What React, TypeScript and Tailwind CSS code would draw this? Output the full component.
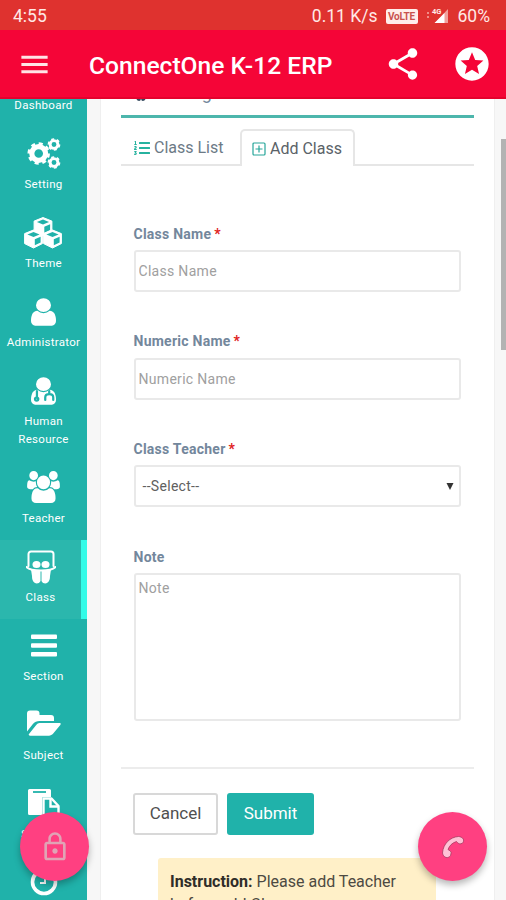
import type { ReactNode } from "react";
import { clsx } from "clsx";
import { FaListOl, FaSlideshare } from "react-icons/fa";
import { MdLockOutline, MdMenu, MdShare, MdStars } from "react-icons/md";

const USER_PATH =
  "M1536 1399q0 109-62.5 187t-150.5 78h-854q-88 0-150.5-78t-62.5-187q0-85 8.5-160.5t31.5-152 58.5-131 94-89 134.5-34.5q131 128 313 128t313-128q76 0 134.5 34.5t94 89 58.5 131 31.5 152 8.5 160.5zm-256-887q0 159-112.5 271.5t-271.5 112.5-271.5-112.5-112.5-271.5 112.5-271.5 271.5-112.5 271.5 112.5 112.5 271.5z";

function UserIcon() {
  return (
    <svg viewBox="0 0 1792 1792" preserveAspectRatio="none" className="h-8 w-[35px]" fill="currentColor">
      <path d={USER_PATH} />
    </svg>
  );
}

function DoctorIcon() {
  return (
    <svg viewBox="0 0 1792 1792" preserveAspectRatio="none" className="h-8 w-[35px]" fill="currentColor">
      <path d={USER_PATH} />
      <g fill="none" stroke="#20b2aa" strokeWidth="115" strokeLinecap="round">
        <path d="M560 900v370" />
        <circle cx="545" cy="1350" r="85" />
        <path d="M1190 900v170M985 1400v-140q0-190 205-190t205 190v140" />
      </g>
    </svg>
  );
}

function UsersIcon() {
  return (
    <svg viewBox="0 0 2048 1792" preserveAspectRatio="none" className="mb-0.5 h-[32px] w-[35px]" fill="currentColor">
      <path d="M657 896q-162 5-265 128h-134q-82 0-138-40.5t-56-118.5q0-353 124-353 6 0 43.5 21t97.5 42.5 119 21.5q67 0 133-23-5 37-5 66 0 139 81 256zm1071 637q0 120-73 189.5t-194 69.5h-874q-121 0-194-69.5t-73-189.5q0-53 3.5-103.5t14-109 26.5-108.5 43-97.5 62-81 85.5-53.5 111.5-20q10 0 43 21.5t73 48 107 48 135 21.5 135-21.5 107-48 73-48 43-21.5q61 0 111.5 20t85.5 53.5 62 81 43 97.5 26.5 108.5 14 109 3.500 103.500zm-1024-1277q0 106-75 181t-181 75-181-75-75-181 75-181 181-75 181 75 75 181zm704 384q0 159-112.5 271.5t-271.5 112.5-271.5-112.5-112.5-271.5 112.5-271.5 271.5-112.5 271.5 112.5 112.5 271.5zm576 225q0 78-56 118.5t-138 40.5h-134q-103-123-265-128 81-117 81-256 0-29-5-66 66 23 133 23 59 0 119-21.5t97.5-42.5 43.5-21q124 0 124 353zm-128-609q0 106-75 181t-181 75-181-75-75-181 75-181 181-75 181 75 75 181z" />
    </svg>
  );
}

// pathLength splits the outer ring into even teeth
function Gear({ x, y, r, teeth }: { x: number; y: number; r: number; teeth: number }) {
  return (
    <g transform={`translate(${x} ${y})`} fill="none" stroke="currentColor">
      <circle r={r} strokeWidth={r * 0.75} />
      <circle r={r * 1.42} strokeWidth={r * 0.42} pathLength={teeth * 2} strokeDasharray="1.05 0.95" />
    </g>
  );
}

function CogsIcon() {
  return (
    <svg viewBox="0 0 34 32" className="h-8 w-[34px]">
      <Gear x={11.7} y={15.5} r={6.9} teeth={8} />
      <Gear x={27} y={6.5} r={3.9} teeth={6} />
      <Gear x={27} y={24.5} r={3.9} teeth={6} />
    </svg>
  );
}

function Cube({ x, y }: { x: number; y: number }) {
  return (
    <g transform={`translate(${x} ${y})`}>
      <path d="M9.5 0 18.4 3.6v10L9.5 18 .6 13.6v-10z" fill="white" stroke="white" strokeLinejoin="round" />
      <path d="M9.5 2 15.6 4.4 9.5 6.9 3.4 4.4z" fill="#20b2aa" />
      <path d="M10.8 9.2 16.6 6.7v5.7l-5.8 2.9z" fill="#20b2aa" />
    </g>
  );
}

function CubesIcon() {
  return (
    <svg viewBox="0 0 38 32" className="mr-px h-8 w-[38px]">
      <Cube x={9.5} y={0.5} />
      <Cube x={0} y={13} />
      <Cube x={19} y={13} />
    </svg>
  );
}

function SlideshareIcon() {
  return (
    <svg viewBox="0 0 30 34" className="h-[34px] w-[30px]" fill="currentColor">
      <path
        d="M2.500 16V4a2.500 2.500 0 0 1 2.500-2.500h20A2.500 2.500 0 0 1 27.500 4v12M.5 17c3 3 7 3.500 14.500 3.500S26.500 20 29.500 17"
        fill="none"
        stroke="currentColor"
        strokeWidth="2"
        strokeLinecap="round"
      />
      <ellipse cx="10.500" cy="14.500" rx="4" ry="3.600" />
      <ellipse cx="19.500" cy="14.500" rx="4" ry="3.600" />
      <path d="M5 19.500c3 1 6 1 9.500.5v11c-1 2.500-4 3-5.500 2-2.500-1.500-3-4-3-7z" />
      <path d="M25 19.500c-3 1-6 1-9.500.5v11c1 2.500 4 3 5.500 2 2.500-1.500 3-4 3-7z" />
    </svg>
  );
}

function BarsIcon() {
  return (
    <svg viewBox="0 0 26 24" className="h-6 w-[26px]" fill="currentColor">
      <rect y="0.500" width="26" height="4.500" rx="1" />
      <rect y="9.300" width="26" height="4.500" rx="1" />
      <rect y="18.100" width="26" height="4.500" rx="1" />
    </svg>
  );
}

function FolderIcon() {
  return (
    <svg viewBox="0 0 34 26" className="mb-1 h-[26px] w-[34px]" fill="currentColor">
      <path d="M0 21V3.500A3 3 0 0 1 3 .5h6.500a3 3 0 0 1 3 3V5H24a3 3 0 0 1 3 3v3H12.500c-2.500 0-5 1-6.800 3.200L0 21.500z" />
      <path d="M12.500 13H32.500c1.300 0 1.600.9.8 1.900l-7.300 8.900c-.9 1.100-2.600 1.900-4 1.900H3c-1.300 0-1.700-.8-.8-1.900l7-8.700c.9-1.200 2.200-2.100 3.300-2.100z" />
    </svg>
  );
}

function PasteIcon() {
  return (
    <svg viewBox="0 0 32 32" className="h-8 w-8" fill="currentColor">
      <path d="M1.500 1h20a1.500 1.500 0 0 1 1.500 1.500V9h-7.500a1.500 1.500 0 0 0-1.500 1.500V27H1.500A1.500 1.500 0 0 1 0 25.500v-23A1.500 1.500 0 0 1 1.500 1z" />
      <path d="M5 4h13" stroke="#20b2aa" strokeWidth="1.800" />
      <path d="M15.500 10.500h8l7 7.500v13h-15z" fill="#20b2aa" stroke="white" strokeWidth="2.400" strokeLinejoin="round" />
      <path d="M22.500 10.500V18.500h8" fill="none" stroke="white" strokeWidth="2.400" />
    </svg>
  );
}

function ClockIcon() {
  return (
    <svg viewBox="0 0 28 28" className="h-7 w-7" fill="none" stroke="currentColor">
      <circle cx="14" cy="14" r="11.500" strokeWidth="3.600" />
      <path d="M15 7v8h-5" strokeWidth="2" />
    </svg>
  );
}

function PlusSquareIcon() {
  return (
    <svg viewBox="0 0 14 14" className="h-3.5 w-3.5" fill="none" stroke="#26a69a">
      <rect x="1" y="1" width="12" height="12" rx="1" strokeWidth="1.200" />
      <path d="M7 3.500v7M3.500 7h7" strokeWidth="1.200" />
    </svg>
  );
}

type MenuItem = { label: string; icon: ReactNode; active?: boolean; tall?: boolean };

const menu: MenuItem[] = [
  { label: "Dashboard", icon: null },
  { label: "Setting", icon: <CogsIcon /> },
  { label: "Theme", icon: <CubesIcon /> },
  { label: "Administrator", icon: <UserIcon /> },
  { label: "Human Resource", icon: <DoctorIcon />, tall: true },
  { label: "Teacher", icon: <UsersIcon /> },
  { label: "Class", icon: <SlideshareIcon />, active: true },
  { label: "Section", icon: <BarsIcon /> },
  { label: "Subject", icon: <FolderIcon /> },
  { label: "Syllabus", icon: <PasteIcon /> },
];

function Sidebar() {
  return (
    <nav className="h-full w-[87px] shrink-0 overflow-hidden bg-[#20b2aa] text-white">
      <ul className="-mt-[51px]">
        {menu.map((item) => (
          <li
            key={item.label}
            className={clsx(
              "flex flex-col items-center pt-[9px]",
              item.tall ? "h-[97px]" : "h-[79px]",
              item.active && "border-r-[6px] border-[#33fbe8] bg-[#2bb7ad]",
            )}
          >
            <span className="flex h-9 items-center justify-center">{item.icon}</span>
            <span
              className={clsx(
                "mt-[3px] text-center text-[11.5px] leading-[18px] tracking-[0.3px]",
                item.tall && "w-[60px]",
              )}
            >
              {item.label}
            </span>
          </li>
        ))}
        <li className="flex justify-center pt-[12px]">
          <ClockIcon />
        </li>
      </ul>
    </nav>
  );
}

function StatusBar() {
  return (
    <div className="flex h-[30px] items-center bg-[#df322f] pt-[2px] pr-[16px] pl-[13px] text-[17.5px] text-[#ffe9e6]">
      <span>4:55</span>
      <span className="ml-auto">0.11 K/s</span>
      <span className="ml-2 flex h-[15px] w-8 items-center justify-center rounded-[2px] bg-[#ffeeea] text-[10px] font-bold tracking-[-0.2px] text-[#c9524e]">
        VoLTE
      </span>
      <svg viewBox="0 0 24 18" className="ml-2 h-[18px] w-6">
        <path d="M1 6h2M1 10h2" stroke="#f6aaa5" strokeWidth="1.500" />
        <path d="M22 2v14H9z" fill="#f0a19c" />
        <path d="M18.500 6v10H8.500z" fill="#fff" />
        <text x="6" y="7" fontSize="7.500" fontWeight="700" fill="#ffe9e6">
          4G
        </text>
      </svg>
      <span className="ml-2">60%</span>
    </div>
  );
}

function AppBar() {
  return (
    <header className="flex h-[69px] items-center border-b-2 border-[#e4022c] bg-[#f50537] pt-px pr-[14px] pl-[17px] text-white">
      <MdMenu size={35} className="text-[#ffe3e6]" />
      <h1 className="ml-[37px] pt-[4px] text-[24.6px] font-medium whitespace-nowrap">ConnectOne K-12 ERP</h1>
      <MdShare size={38} className="ml-auto" />
      <MdStars size={40} className="ml-[30px]" />
    </header>
  );
}

function Field({ label, required, children }: { label: string; required?: boolean; children: ReactNode }) {
  return (
    <div>
      <div className="flex h-9 items-center pt-[3px] text-[14px] leading-none font-bold tracking-[0.25px] text-[#73879c]">
        {label}
        {required ? <span className="ml-[3px] text-[#e02020]">*</span> : null}
      </div>
      {children}
    </div>
  );
}

const control =
  "block w-full rounded-[3px] border-2 border-[#e9e9e9] bg-white text-[14px] tracking-[0.3px] placeholder:text-[#a0a0a0]";

function ClassPanel() {
  return (
    <main className="h-full w-[395px] overflow-hidden border-x border-[#efefef] bg-white">
      <div className="ml-5 w-[353px]">
        <div className="-mt-[17px] flex h-[36px] items-start gap-2 border-b-[3px] border-[#4db6ac] pl-[12px] text-[18px] text-[#73879c]">
          <FaSlideshare size={16} className="mt-[3px] text-[#34495e]" />
          <span className="mt-[2px] leading-none tracking-[-0.1px]">Manage Class</span>
        </div>
        <div className="mt-[11px] flex h-[37px] text-[16px] text-[#5a6268]">
          <div className="flex w-[119px] items-center gap-1 border-b-2 border-[#e6e6e6] pt-0.5 pl-[13px] whitespace-nowrap text-[#6c7a86]">
            <FaListOl size={16} className="text-[#26b29f]" />
            Class List
          </div>
          <div className="flex w-[115px] items-center gap-1 rounded-t-[5px] border-2 border-b-0 border-[#e6e6e6] pl-[10px] whitespace-nowrap">
            <PlusSquareIcon />
            Add Class
          </div>
          <div className="flex-1 border-b-2 border-[#e6e6e6]" />
        </div>

        <form className="ml-[12.5px] w-[327px] pt-[48px]">
          <div className="space-y-[29.7px]">
            <Field label="Class Name" required>
              <input className={clsx(control, "h-[42px] px-[3px]")} placeholder="Class Name" />
            </Field>
            <Field label="Numeric Name" required>
              <input className={clsx(control, "h-[42px] px-[3px]")} placeholder="Numeric Name" />
            </Field>
            <Field label="Class Teacher" required>
              <div className={clsx(control, "flex h-[42px] items-center justify-between pr-[5px] pl-[7px] text-[#606060]")}>
                --Select--
                <svg viewBox="0 0 8 7" className="h-[7px] w-2" fill="#333">
                  <path d="M.5 0h7L4 7z" />
                </svg>
              </div>
            </Field>
            <Field label="Note">
              <textarea className={clsx(control, "h-[148px] resize-none px-[3px] py-[3px]")} placeholder="Note" />
            </Field>
          </div>
        </form>

        <div className="mt-[46px] border-t-2 border-[#ececec] pt-6 pl-[12px]">
          <div className="flex gap-[9px] text-[17px]">
            <button className="h-[42px] w-[85px] rounded-[3px] border-2 border-[#d8d8d8] text-[#505050]">Cancel</button>
            <button className="h-[42px] w-[87px] rounded-[3px] bg-[#20b2aa] text-white">Submit</button>
          </div>
        </div>
        <div className="mt-[23px] ml-[37px] h-20 w-[278px] rounded-[3px] bg-[#fff0c8] px-3 pt-3 text-[16px] leading-[23px] text-[#4d4a42]">
          <b className="text-[#2f2d28]">Instruction:</b> Please add Teacher before add Class.
        </div>
      </div>
    </main>
  );
}

export default function App() {
  return (
    <div className="relative h-[900px] w-[506px] overflow-hidden bg-[#f7f7f7] font-['Roboto',sans-serif]">
      <StatusBar />
      <AppBar />
      <div className="flex h-[801px] overflow-hidden">
        <Sidebar />
        <div className="w-[13px] shrink-0" />
        <ClassPanel />
        <div className="mt-[40px] ml-auto h-[211px] w-[5px] bg-[#b3b3b3]" />
      </div>

      <button className="absolute top-[812px] left-5 flex h-[69px] w-[69px] items-center justify-center rounded-full bg-[#ff4081] text-[#e0a3b5] shadow-[0_4px_7px_rgba(0,0,0,0.28)]">
        <MdLockOutline size={32} />
      </button>
      <button className="absolute top-[812px] left-[418px] flex h-[69px] w-[69px] items-center justify-center rounded-full bg-[#ff4081] shadow-[0_4px_7px_rgba(0,0,0,0.28)]">
        <svg viewBox="0 0 24 24" className="h-6 w-6" fill="#ffc2d6" stroke="#a83a60" strokeWidth="0.800" strokeLinejoin="round">
          <path d="M1.500 18C2 9 9 2 17.500 1.500c1.500 0 4 1 4.800 2.500.6 1.500.2 3-.8 4.200l-2.500.8c-1.500-.3-2.500-1.200-3.500-2.500C11 8 8.500 10.500 7 14.500c1.500.8 2.800 1.800 3.200 3.200l-.7 3c-1.200 1.300-2.700 2.300-4.500 1.800-2-.7-3.200-2.500-3.500-4.500z" />
        </svg>
      </button>
    </div>
  );
}
